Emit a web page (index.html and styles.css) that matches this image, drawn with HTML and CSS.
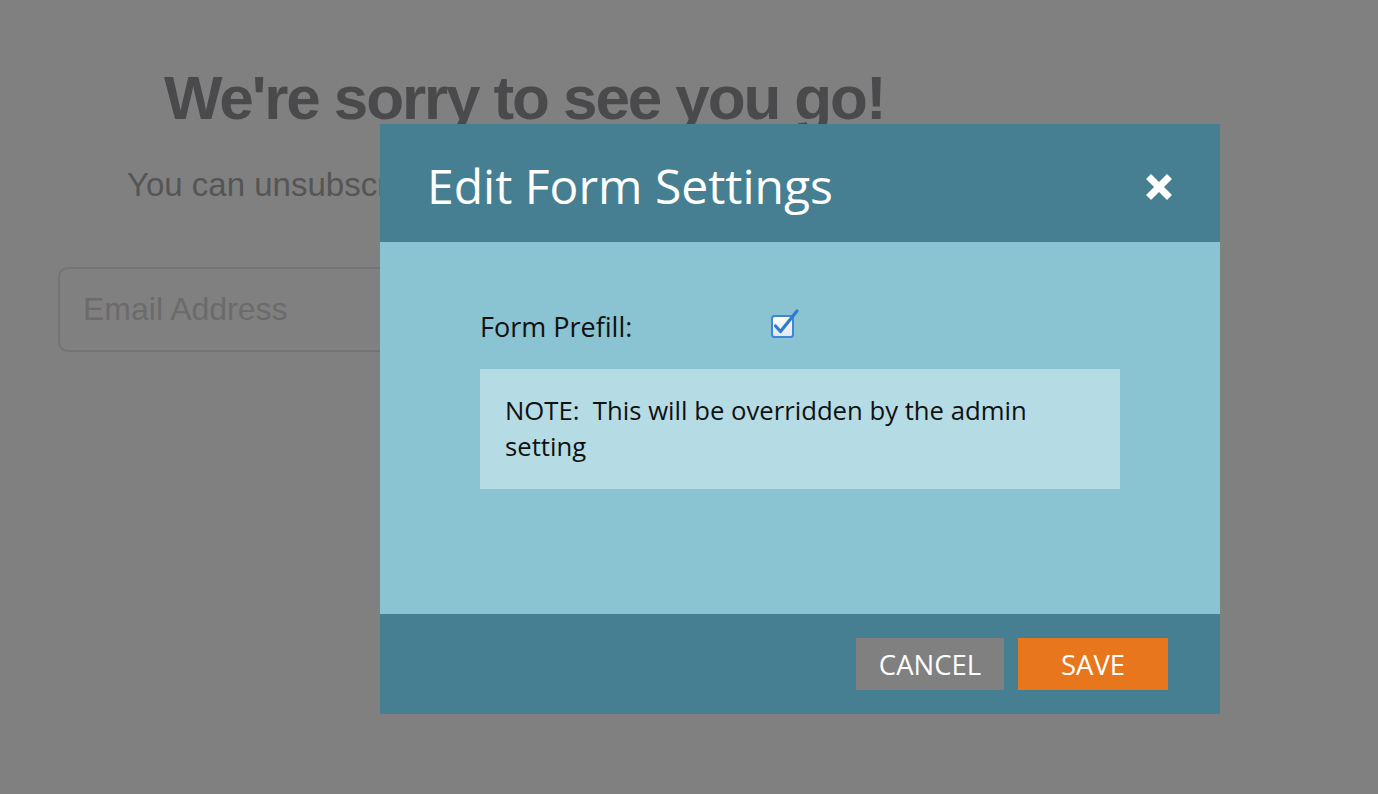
FILE: index.html
```html
<!DOCTYPE html>
<html lang="en">
<head>
<meta charset="utf-8">
<title>Edit Form Settings</title>
<link rel="stylesheet" href="styles.css">
</head>
<body>
<main class="page">
  <h1 class="page-title">We're sorry to see you go!</h1>
  <p class="page-sub">You can unsubscribe from all of our emails below.</p>
  <div class="email-field">Email Address</div>
</main>

<div class="modal" role="dialog" aria-labelledby="modal-title">
  <header class="modal-header">
    <h2 id="modal-title" class="modal-title">Edit Form Settings</h2>
    <button class="modal-close" aria-label="Close">
      <svg width="30" height="30" viewBox="0 0 30 30" aria-hidden="true">
        <path d="M7 7 L23 23 M23 7 L7 23" stroke="#fff" stroke-width="7" stroke-linecap="square" fill="none"/>
      </svg>
    </button>
  </header>
  <section class="modal-body">
    <div class="form-row">
      <span class="form-label">Form Prefill:</span>
      <span class="checkbox" role="checkbox" aria-checked="true">
        <svg width="32" height="34" viewBox="0 0 32 34" aria-hidden="true">
          <defs>
            <linearGradient id="cbfill" x1="0" y1="0" x2="0" y2="1">
              <stop offset="0" stop-color="#ffffff"/>
              <stop offset="1" stop-color="#dfe6ee"/>
            </linearGradient>
          </defs>
          <rect x="2" y="10" width="21" height="21" rx="2.5" fill="url(#cbfill)" stroke="#3f86d6" stroke-width="2"/>
          <path d="M5.5 20 L10.5 25.5 L27 5" stroke="#2f7bd3" stroke-width="3.2" fill="none" stroke-linecap="round" stroke-linejoin="round"/>
        </svg>
      </span>
    </div>
    <div class="note">NOTE:&nbsp; This will be overridden by the admin setting</div>
  </section>
  <footer class="modal-footer">
    <button class="btn btn-cancel">CANCEL</button>
    <button class="btn btn-save">SAVE</button>
  </footer>
</div>
</body>
</html>
```

FILE: styles.css
```css
html, body {
  margin: 0;
  padding: 0;
}

body {
  background: #808080;
  width: 1378px;
  height: 794px;
  overflow: hidden;
  position: relative;
  font-family: "Liberation Sans", Arial, sans-serif;
}

.page {
  display: flex;
  flex-direction: column;
  align-items: flex-start;
}

.page-title {
  margin: 63px 0 0 0;
  padding-left: 164px;
  font-size: 62px;
  line-height: 70px;
  font-weight: 700;
  letter-spacing: -2.1px;
  color: #4a4a4c;
  white-space: nowrap;
}

.page-sub {
  margin: 32px 0 0 0;
  padding-left: 127px;
  font-size: 33px;
  line-height: 40px;
  color: #555556;
  white-space: nowrap;
}

.email-field {
  margin: 62px 0 0 58px;
  box-sizing: border-box;
  width: 700px;
  height: 85px;
  border: 2px solid #747474;
  border-radius: 10px;
  padding-left: 23px;
  display: flex;
  align-items: center;
  font-size: 32px;
  color: #6b6b6c;
}

/* Modal */
.modal {
  position: absolute;
  left: 380px;
  top: 124px;
  width: 840px;
  display: flex;
  flex-direction: column;
  font-family: "Open Sans", "Noto Sans", sans-serif;
}

.modal-header {
  height: 118px;
  background: #467f91;
  display: flex;
  align-items: center;
  justify-content: space-between;
  padding: 0 46px 0 47px;
}

.modal-title {
  margin: 6px 0 0 0;
  font-size: 48px;
  font-weight: 400;
  color: #ffffff;
  line-height: 1;
}

.modal-close {
  background: none;
  border: 0;
  padding: 0;
  margin-top: 8px;
  width: 30px;
  height: 30px;
  display: flex;
  filter: blur(0.5px);
}

.modal-body {
  height: 372px;
  box-sizing: border-box;
  background: #8ac3d2;
  padding: 67px 100px 0 100px;
  display: flex;
  flex-direction: column;
}

.form-row {
  display: flex;
  align-items: center;
  height: 36px;
}

.form-label {
  width: 290px;
  font-size: 27px;
  line-height: 36px;
  color: #111;
}

.checkbox {
  display: flex;
  margin-top: -8px;
}

.note {
  margin-top: 24px;
  background: #b5dce5;
  padding: 24px 40px 24px 25px;
  font-size: 25.7px;
  line-height: 36px;
  color: #111;
}

.modal-footer {
  height: 100px;
  box-sizing: border-box;
  background: #467f91;
  display: flex;
  justify-content: flex-end;
  align-items: center;
  gap: 14px;
  padding-right: 52px;
}

.btn {
  height: 52px;
  border: 0;
  padding: 0;
  font-family: "Open Sans", "Noto Sans", sans-serif;
  font-size: 27.5px;
  color: #ffffff;
  display: flex;
  align-items: center;
  justify-content: center;
}

.btn-cancel {
  width: 148px;
  background: #808080;
}

.btn-save {
  width: 150px;
  background: #e8761c;
}
```
